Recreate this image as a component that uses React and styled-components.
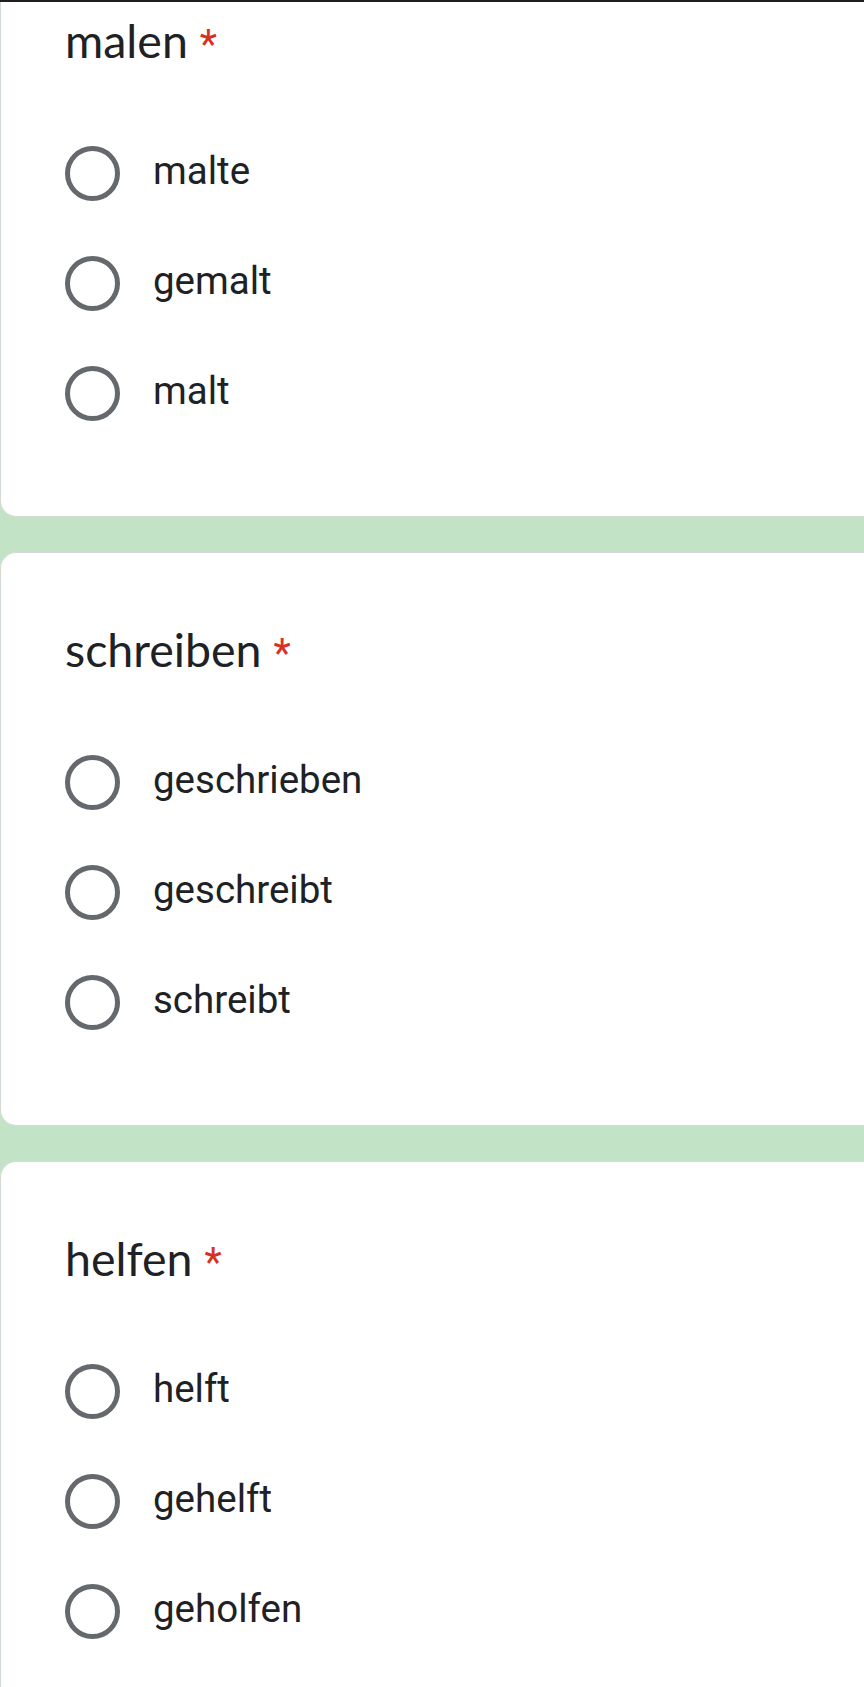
import React from "react";
import styled, { createGlobalStyle } from "styled-components";

const GlobalStyle = createGlobalStyle`
  html, body {
    margin: 0;
    padding: 0;
    background: #c2e3c5;
  }
  body {
    font-family: Roboto, "Liberation Sans", sans-serif;
    color: #202124;
    overflow: hidden;
  }
`;

const TopBar = styled.div`
  height: 2px;
  background: #1f1f1f;
`;

const List = styled.div`
  display: flex;
  flex-direction: column;
  gap: 35px;
`;

const Card = styled.section`
  background: #ffffff;
  border: 1px solid #d3dbd4;
  border-right: none;
  border-top: ${(p) => (p.$cut ? "none" : "1px solid #d3dbd4")};
  border-radius: ${(p) => (p.$cut ? "0 0 0 16px" : "16px 0 0 16px")};
  padding: ${(p) => (p.$cut ? "10px" : "68px")} 0 68px 64px;
  display: flex;
  flex-direction: column;
`;

const Title = styled.h2`
  margin: 0 0 50px 0;
  font-family: Lato, "Open Sans", sans-serif;
  font-weight: 400;
  font-size: 46.5px;
  line-height: 56px;
  color: #202124;
`;

const Required = styled.span`
  font-family: Roboto, "Liberation Sans", sans-serif;
  font-size: 40px;
  line-height: 0;
  color: #d93025;
  margin-left: 12px;
`;

const Options = styled.div`
  display: flex;
  flex-direction: column;
`;

const Row = styled.label`
  display: flex;
  align-items: center;
  height: 110px;
  gap: 33px;
`;

const Radio = styled.span`
  box-sizing: border-box;
  width: 55px;
  height: 55px;
  border-radius: 50%;
  border: 5px solid #65686c;
  flex: none;
`;

const Label = styled.span`
  font-family: Roboto, "Liberation Sans", sans-serif;
  font-size: 38.5px;
  line-height: 45px;
  padding-bottom: 6px;
  color: #202124;
`;

const questions = [
  { title: "malen", options: ["malte", "gemalt", "malt"] },
  { title: "schreiben", options: ["geschrieben", "geschreibt", "schreibt"] },
  { title: "helfen", options: ["helft", "gehelft", "geholfen"] },
];

export default function App() {
  return (
    <>
      <GlobalStyle />
      <TopBar />
      <List>
        {questions.map((q, i) => (
          <Card key={q.title} $cut={i === 0}>
            <Title>
              {q.title}
              <Required>*</Required>
            </Title>
            <Options>
              {q.options.map((o) => (
                <Row key={o}>
                  <Radio />
                  <Label>{o}</Label>
                </Row>
              ))}
            </Options>
          </Card>
        ))}
      </List>
    </>
  );
}
